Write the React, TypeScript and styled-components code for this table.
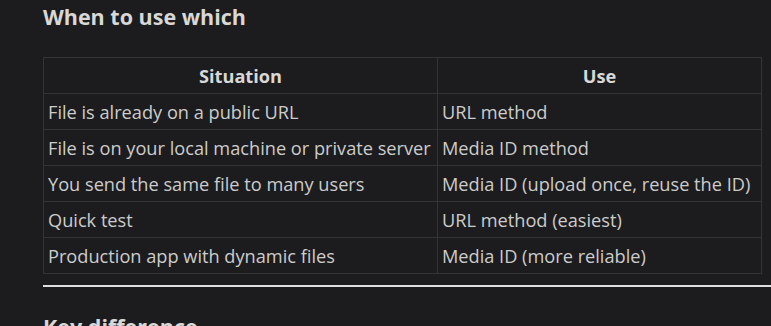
import styled, { createGlobalStyle } from "styled-components";

const GlobalStyle = createGlobalStyle`
    html, body {
        margin: 0;
        padding: 0;
        background: #1c1c1e;
        overflow: hidden;
    }
    body {
        font-family: "Open Sans", "Noto Sans", sans-serif;
        color: #cccccc;
    }
`;

const Page = styled.div`
    width: 760px;
    padding: 0 0 0 43px;
    height: 326px;
    overflow: hidden;
`;

const Heading = styled.h3`
    margin: 0;
    padding-top: 3px;
    font-size: 21.5px;
    line-height: 28px;
    font-weight: 700;
    color: #d8d8d8;
`;

const Table = styled.table`
    width: 718px;
    margin-top: 26px;
    border-collapse: collapse;
    table-layout: fixed;
    font-size: 18.2px;
`;

const Cell = styled.td<{ $width?: number }>`
    border: 1px solid #333436;
    height: 36px;
    padding: 0 4px;
    white-space: nowrap;
    width: ${(p) => (p.$width ? `${p.$width}px` : "auto")};
    box-sizing: border-box;
`;

const HeadCell = styled(Cell).attrs({ as: "th" })`
    font-weight: 700;
    text-align: center;
    color: #d8d8d8;
`;

const Rule = styled.hr`
    margin: 11px 0 0;
    width: 760px;
    height: 2px;
    border: none;
    background: #dedede;
`;

const NextHeading = styled(Heading)`
    padding-top: 26px;
`;

const rows: [string, string][] = [
    ["File is already on a public URL", "URL method"],
    ["File is on your local machine or private server", "Media ID method"],
    ["You send the same file to many users", "Media ID (upload once, reuse the ID)"],
    ["Quick test", "URL method (easiest)"],
    ["Production app with dynamic files", "Media ID (more reliable)"],
];

export default function App() {
    return (
        <>
            <GlobalStyle />
            <Page>
                <Heading>When to use which</Heading>
                <Table>
                    <thead>
                        <tr>
                            <HeadCell $width={394}>Situation</HeadCell>
                            <HeadCell $width={324}>Use</HeadCell>
                        </tr>
                    </thead>
                    <tbody>
                        {rows.map(([situation, use]) => (
                            <tr key={situation}>
                                <Cell>{situation}</Cell>
                                <Cell>{use}</Cell>
                            </tr>
                        ))}
                    </tbody>
                </Table>
                <Rule />
                <NextHeading>Key difference</NextHeading>
            </Page>
        </>
    );
}
